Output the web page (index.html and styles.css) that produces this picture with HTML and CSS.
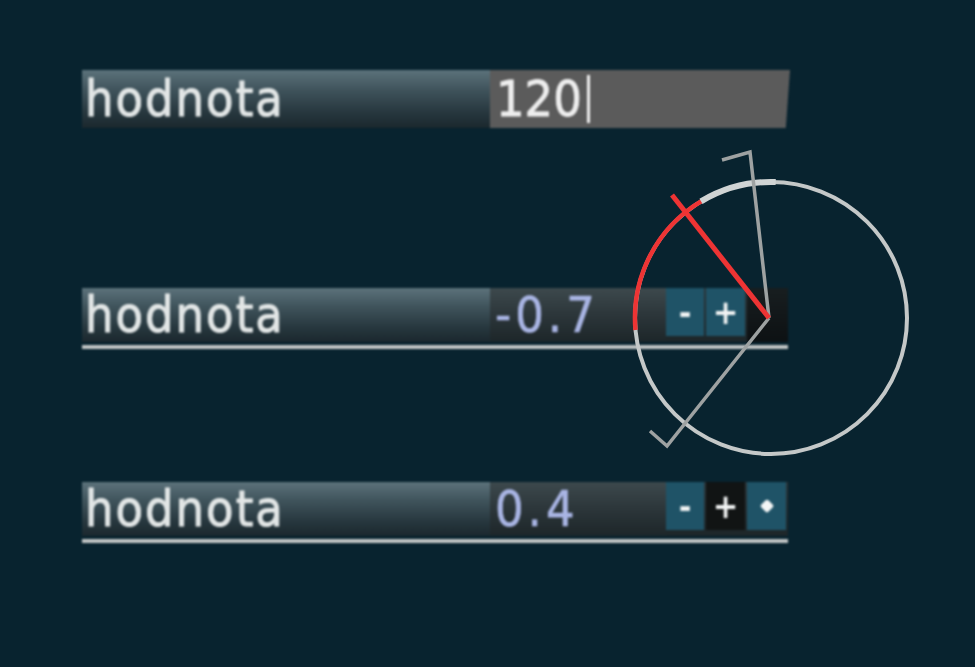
FILE: index.html
```html
<!DOCTYPE html>
<html>
<head>
<meta charset="utf-8">
<link rel="stylesheet" href="styles.css">
</head>
<body>
<div class="page">
  <div class="row row-edit">
    <div class="label">hodnota</div>
    <div class="input"><span class="input-text">120</span><span class="cursor"></span></div>
  </div>

  <div class="row-wrap row-two">
    <div class="row">
      <div class="label">hodnota</div>
      <div class="value">-0.7</div>
      <div class="btns">
        <div class="btn teal">-</div>
        <div class="btn teal">+</div>
        <div class="btn dark"></div>
      </div>
    </div>
    <div class="underline"></div>
  </div>

  <div class="row-wrap row-three">
    <div class="row">
      <div class="label">hodnota</div>
      <div class="value">0.4</div>
      <div class="btns">
        <div class="btn teal">-</div>
        <div class="btn black">+</div>
        <div class="btn teal"><span class="dot"></span></div>
      </div>
    </div>
    <div class="underline"></div>
  </div>
</div>

<svg class="gizmo" width="975" height="667" viewBox="0 0 975 667">
  <circle cx="771" cy="318" r="136" fill="none" stroke="#c4c8c8" stroke-width="4"/>
  <path d="M701 201.4 A136 136 0 0 1 775.7 182" fill="none" stroke="#d0d4d4" stroke-width="6"/>
  <path d="M635.5 330 A136 136 0 0 1 701 201.4" fill="none" stroke="#ee3434" stroke-width="4.5"/>
  <path d="M769 318 L750 152 L722 160" fill="none" stroke="#9ea2a2" stroke-width="3.5" stroke-linejoin="miter"/>
  <path d="M769 318 L667 446 L650 431" fill="none" stroke="#9ea2a2" stroke-width="3.5" stroke-linejoin="miter"/>
  <path d="M769 318 L672 195" fill="none" stroke="#ee3434" stroke-width="5"/>
</svg>
</body>
</html>
```

FILE: styles.css
```css
html, body {
  margin: 0;
  padding: 0;
  background: #08232f;
  width: 975px;
  height: 667px;
  overflow: hidden;
}

.page {
  padding: 70px 0 0 82px;
  display: flex;
  flex-direction: column;
  font-family: "DejaVu Sans Condensed", "DejaVu Sans", sans-serif;
  font-stretch: condensed;
  filter: blur(0.8px);
}

.row {
  display: flex;
  height: 54px;
}

.row-edit {
  height: 58px;
  width: 708px;
}

.label {
  width: 408px;
  flex: none;
  box-sizing: border-box;
  padding-left: 3px;
  background: linear-gradient(180deg, #5c727b 0%, #3f535b 35%, #26363d 75%, #1b282e 100%);
  color: #e2e6e6;
  font-size: 50px;
  letter-spacing: 2px;
  -webkit-text-stroke: 0.9px #e2e6e6;
  line-height: 54px;
  display: flex;
  align-items: center;
}

.row-edit .label {
  line-height: 58px;
}

.input {
  width: 300px;
  flex: none;
  background: #5b5b5b;
  display: flex;
  align-items: center;
  padding-left: 6px;
  box-sizing: border-box;
  clip-path: polygon(0 0, 100% 0, 98.6% 100%, 0 100%);
  color: #eeeeee;
  font-size: 50px;
  -webkit-text-stroke: 0.8px #eeeeee;
}

.cursor {
  width: 3px;
  height: 48px;
  background: #f0f0f0;
  margin-left: 5px;
}

.row-wrap {
  display: flex;
  flex-direction: column;
  gap: 3px;
  width: 706px;
}

.row-two {
  margin-top: 160px;
}

.row-three {
  margin-top: 133px;
}

.value {
  width: 176px;
  flex: none;
  box-sizing: border-box;
  padding-left: 5px;
  background: linear-gradient(180deg, #3d494d 0%, #2c363a 50%, #1d2629 100%);
  color: #a9b5e4;
  font-size: 50px;
  letter-spacing: 4px;
  -webkit-text-stroke: 0.6px #a9b5e4;
  line-height: 54px;
}

.btns {
  display: flex;
  gap: 2px;
  flex: 1;
  background: linear-gradient(180deg, #2c363a 0%, #1d2629 100%);
}

.btn {
  width: 38px;
  height: 48px;
  flex: none;
  color: #f2f4f4;
  font-family: "DejaVu Sans", sans-serif;
  font-size: 34px;
  font-weight: bold;
  display: flex;
  align-items: center;
  justify-content: center;
}

.btn + .btn {
  width: 39px;
}

.teal {
  background: #1f5367;
}

.black {
  background: #111414;
}

.dark {
  height: 54px;
  flex: 1;
  background: linear-gradient(180deg, #181e20 0%, #0d1113 100%);
}

.dot {
  width: 10px;
  height: 10px;
  background: #f4f6f6;
  transform: rotate(45deg);
  border-radius: 2px;
}

.underline {
  height: 4px;
  background: #c2c6c6;
}

.gizmo {
  position: absolute;
  left: 0;
  top: 0;
  filter: blur(0.6px);
}
```
